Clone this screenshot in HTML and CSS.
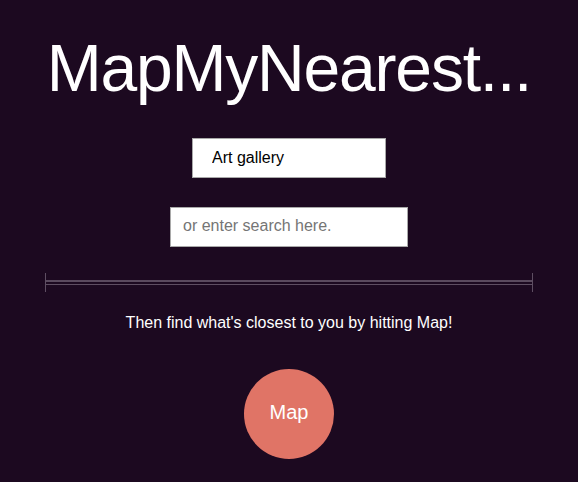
FILE: index.html
```html
<!DOCTYPE html>
<html>
<head>
<meta charset="utf-8">
<link rel="stylesheet" href="styles.css">
</head>
<body>
<main class="page">
  <h1 class="title">MapMyNearest...</h1>
  <select class="category">
    <option>Art gallery</option>
  </select>
  <input class="search" type="text" placeholder="or enter search here.">
  <div class="divider"><div class="divider-line"></div></div>
  <p class="hint">Then find what's closest to you by hitting Map!</p>
  <button class="map-btn">Map</button>
</main>
</body>
</html>
```
FILE: styles.css
```css
html, body {
  margin: 0;
  padding: 0;
  background: #1c0920;
  height: 100%;
}
.page {
  display: flex;
  flex-direction: column;
  align-items: center;
  font-family: "Liberation Sans", Arial, sans-serif;
  color: #fff;
}
.title {
  margin: 35px 0 0;
  font-size: 66px;
  line-height: 66px;
  font-weight: normal;
  letter-spacing: -1.2px;
}
.category {
  appearance: none;
  -webkit-appearance: none;
  margin-top: 37px;
  width: 194px;
  height: 40px;
  box-sizing: border-box;
  border: 1px solid #a9a9a9;
  border-radius: 0;
  background: #fff;
  color: #000;
  font-family: "Liberation Sans", Arial, sans-serif;
  font-size: 16px;
  padding: 0 0 2px 19px;
}
.search {
  margin-top: 29px;
  width: 238px;
  height: 40px;
  box-sizing: border-box;
  border: 1px solid #a9a9a9;
  border-radius: 0;
  background: #fff;
  font-family: "Liberation Sans", Arial, sans-serif;
  font-size: 16px;
  padding: 0 12px 2px;
  outline: none;
}
.search::placeholder {
  color: #757575;
}
.divider {
  margin-top: 26px;
  width: 488px;
  height: 19px;
  box-sizing: border-box;
  border-left: 1px solid #5e4e62;
  border-right: 1px solid #5e4e62;
  display: flex;
  align-items: center;
}
.divider-line {
  flex: 1;
  height: 2px;
  border-top: 2px solid #5a4a5e;
  border-bottom: 1px solid #5e4e62;
}
.hint {
  margin: 21px 0 0;
  font-size: 16px;
  line-height: 20px;
}
.map-btn {
  margin-top: 36px;
  width: 90px;
  height: 90px;
  border-radius: 50%;
  border: none;
  background: #e07466;
  color: #fff;
  font-family: "Liberation Sans", Arial, sans-serif;
  font-size: 20px;
  padding: 0 0 4px;
}
```
